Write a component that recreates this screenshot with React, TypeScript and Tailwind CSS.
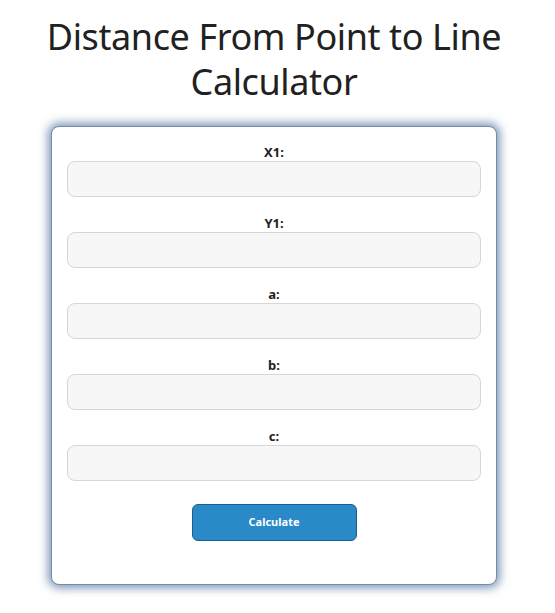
import { useState } from "react";

const fields = [
  { id: "x1", label: "X1:" },
  { id: "y1", label: "Y1:" },
  { id: "a", label: "a:" },
  { id: "b", label: "b:" },
  { id: "c", label: "c:" },
];

const Field = ({ id, label }: { id: string; label: string }) => {
  const [value, setValue] = useState("");
  return (
    <div className="flex flex-col items-center">
      <label
        htmlFor={id}
        className="text-[13px] leading-[16px] font-bold text-[#222] mb-[1px]"
      >
        {label}
      </label>
      <input
        id={id}
        type="number"
        value={value}
        onChange={(e) => setValue(e.target.value)}
        className="w-full h-[36px] rounded-[8px] border border-[#d6d6d8] bg-[#f7f7f8] px-3 outline-none"
      />
    </div>
  );
};

export default function App() {
  return (
    <div
      className="min-h-[613px] bg-white flex flex-col items-center pr-[7px]"
      style={{ fontFamily: '"Noto Sans", "Open Sans", sans-serif' }}
    >
      <h1 className="mt-[14px] text-[36px] leading-[45px] tracking-[-0.4px] text-[#212121] text-center font-normal w-[470px]">
        Distance From Point to Line Calculator
      </h1>
      <div className="mt-[22px] w-[446px] bg-white rounded-[8px] border border-[#6f8cab] shadow-[0_0_10px_3px_rgba(70,105,150,0.7)] px-[15px] pt-[17px] pb-[43px]">
        <div className="flex flex-col gap-[18px]">
          {fields.map((f) => (
            <Field key={f.id} id={f.id} label={f.label} />
          ))}
        </div>
        <div className="flex justify-center mt-[23px]">
          <button className="w-[165px] h-[37px] rounded-[6px] bg-[#2a8ac8] border border-[#1a5f92] text-white text-[11px] font-bold">
            Calculate
          </button>
        </div>
      </div>
    </div>
  );
}
